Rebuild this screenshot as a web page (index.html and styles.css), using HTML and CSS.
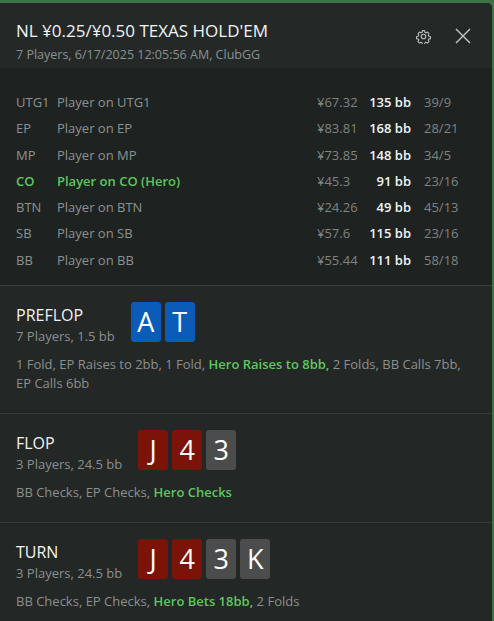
FILE: index.html
```html
<!DOCTYPE html>
<html>
<head>
    <title>Hand History</title>
    <link rel="stylesheet" href="styles.css">
</head>
<body>
    <div class="panel">
        <div class="header">
            <div class="header-text">
                <div class="title">NL ¥0.25/¥0.50 TEXAS HOLD'EM</div>
                <div class="subtitle">7 Players, 6/17/2025 12:05:56 AM, ClubGG</div>
            </div>
            <div class="header-icons">
                <svg class="gear" width="15" height="15" viewBox="0 0 24 24" fill="none" stroke="#b9bdbc" stroke-width="1.8" stroke-linejoin="round">
                    <path d="M10.3 2.5h3.4l.5 2.7 1.7.9 2.5-1.2 2.4 2.4-1.2 2.5.9 1.7 2.7.5v3.4l-2.7.5-.9 1.7 1.2 2.5-2.4 2.4-2.5-1.2-1.7.9-.5 2.7h-3.4l-.5-2.7-1.7-.9-2.5 1.2-2.4-2.4 1.2-2.5-.9-1.7-2.7-.5v-3.4l2.7-.5.9-1.7-1.2-2.5 2.4-2.4 2.5 1.2 1.7-.9z"/>
                    <circle cx="12" cy="12" r="3.6"/>
                </svg>
                <svg class="close" width="16" height="16" viewBox="0 0 16 16" stroke="#c4c8c7" stroke-width="1.4">
                    <path d="M1 1L15 15M15 1L1 15"/>
                </svg>
            </div>
        </div>

        <div class="players">
            <div class="row"><span class="pos">UTG1</span><span class="name">Player on UTG1</span><span class="amt">¥67.32</span><span class="bb">135 bb</span><span class="stat">39/9</span></div>
            <div class="row"><span class="pos">EP</span><span class="name">Player on EP</span><span class="amt">¥83.81</span><span class="bb">168 bb</span><span class="stat">28/21</span></div>
            <div class="row"><span class="pos">MP</span><span class="name">Player on MP</span><span class="amt">¥73.85</span><span class="bb">148 bb</span><span class="stat">34/5</span></div>
            <div class="row hero"><span class="pos">CO</span><span class="name">Player on CO (Hero)</span><span class="amt">¥45.3</span><span class="bb">91 bb</span><span class="stat">23/16</span></div>
            <div class="row"><span class="pos">BTN</span><span class="name">Player on BTN</span><span class="amt">¥24.26</span><span class="bb">49 bb</span><span class="stat">45/13</span></div>
            <div class="row"><span class="pos">SB</span><span class="name">Player on SB</span><span class="amt">¥57.6</span><span class="bb">115 bb</span><span class="stat">23/16</span></div>
            <div class="row"><span class="pos">BB</span><span class="name">Player on BB</span><span class="amt">¥55.44</span><span class="bb">111 bb</span><span class="stat">58/18</span></div>
        </div>

        <div class="street">
            <div class="street-head">
                <div class="street-info">
                    <div class="street-name">PREFLOP</div>
                    <div class="street-sub">7 Players, 1.5 bb</div>
                </div>
                <div class="cards">
                    <span class="card blue">A</span>
                    <span class="card blue">T</span>
                </div>
            </div>
            <div class="actions"><span>1 Fold, EP Raises to 2bb, 1 Fold,</span> <b class="hero-act">Hero Raises to 8bb,</b> <span>2 Folds, BB Calls 7bb,</span> <span>EP Calls 6bb</span></div>
        </div>

        <div class="street">
            <div class="street-head">
                <div class="street-info">
                    <div class="street-name">FLOP</div>
                    <div class="street-sub">3 Players, 24.5 bb</div>
                </div>
                <div class="cards">
                    <span class="card red">J</span>
                    <span class="card red">4</span>
                    <span class="card grey">3</span>
                </div>
            </div>
            <div class="actions"><span>BB Checks, EP Checks,</span> <b class="hero-act">Hero Checks</b></div>
        </div>

        <div class="street">
            <div class="street-head">
                <div class="street-info">
                    <div class="street-name">TURN</div>
                    <div class="street-sub">3 Players, 24.5 bb</div>
                </div>
                <div class="cards">
                    <span class="card red">J</span>
                    <span class="card red">4</span>
                    <span class="card grey">3</span>
                    <span class="card grey">K</span>
                </div>
            </div>
            <div class="actions"><span>BB Checks, EP Checks,</span> <b class="hero-act">Hero Bets 18bb,</b> <span>2 Folds</span></div>
        </div>
    </div>
</body>
</html>
```

FILE: styles.css
```css
html, body { margin: 0; padding: 0; height: 100%; }
body { background: #3a7447; font-family: "Open Sans", "Noto Sans", sans-serif; overflow: hidden; }
.panel { margin: 3px 2px 0 0; height: calc(100% - 3px); background: #232726; border-top-right-radius: 5px; overflow: hidden; }

.header { display: flex; justify-content: space-between; align-items: flex-start; padding: 16px 16px 0 16px; height: 49px; background: #242928; }
.title { color: #f2f4f3; font-size: 17px; line-height: 24px; }
.subtitle { color: #8b908f; font-size: 12.5px; line-height: 20px; margin-top: 2px; }
.header-icons { display: flex; align-items: center; gap: 24px; padding-top: 9px; margin-right: 5px; }

.players { background: #1e2221; padding: 21px 16px 12px 16px; border-bottom: 1px solid #3b403f; }
.row { display: grid; grid-template-columns: 41px 1fr 50px 44px 65px; font-size: 13px; line-height: 26.3px; color: #8b9291; white-space: nowrap; }
.row .amt { color: #7e8483; }
.row .bb { color: #f1f3f2; font-weight: 600; text-align: right; }
.row .stat { color: #7e8483; padding-left: 13px; }
.row.hero .pos, .row.hero .name { color: #5ec65e; font-weight: 600; }

.street { padding: 16px 24px 20px 16px; border-bottom: 1px solid #353a39; }
.street-head { display: flex; align-items: flex-start; gap: 16px; }
.street-name { color: #f2f4f3; font-size: 16px; line-height: 22px; margin-top: 2px; }
.street-sub { color: #8b908f; font-size: 13px; line-height: 20px; }
.cards { display: flex; gap: 4px; }
.card { width: 30px; height: 40px; border-radius: 3px; color: #ffffff; font-size: 27px; line-height: 40px; text-align: center; }
.card.blue { background: #0a5cb8; }
.card.red { background: #7b1309; }
.card.grey { background: #4b4c4c; }
.actions { color: #8b908f; font-size: 13px; line-height: 19px; margin-top: 9px; }
.hero-act { color: #5ec65e; font-weight: 600; }
```
